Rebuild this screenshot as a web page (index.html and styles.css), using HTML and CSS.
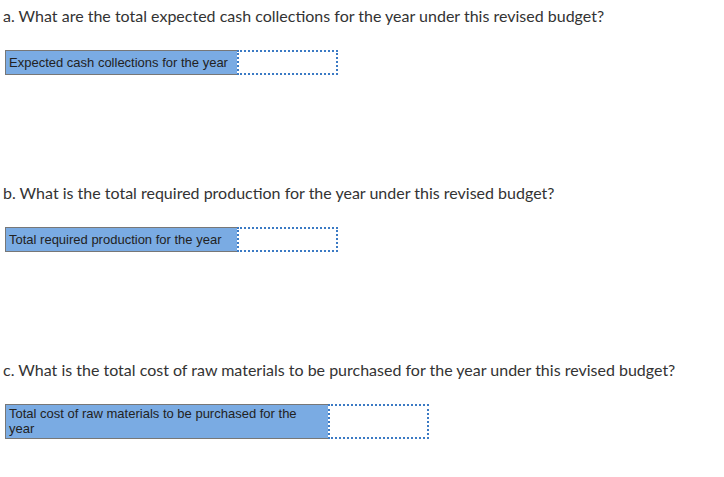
FILE: index.html
```html
<!DOCTYPE html>
<html>
<head>
<meta charset="utf-8">
<link rel="stylesheet" href="styles.css">
</head>
<body>
<div class="page">
  <section class="part">
    <p class="question">a. What are the total expected cash collections for the year under this revised budget?</p>
    <div class="answer-row">
      <div class="label label-short">Expected cash collections for the year</div>
      <div class="input"></div>
    </div>
  </section>
  <section class="part">
    <p class="question">b. What is the total required production for the year under this revised budget?</p>
    <div class="answer-row">
      <div class="label label-short">Total required production for the year</div>
      <div class="input"></div>
    </div>
  </section>
  <section class="part">
    <p class="question">c. What is the total cost of raw materials to be purchased for the year under this revised budget?</p>
    <div class="answer-row">
      <div class="label label-long">Total cost of raw materials to be purchased for the year</div>
      <div class="input"></div>
    </div>
  </section>
</div>
</body>
</html>
```
FILE: styles.css
```css
html, body {
  margin: 0;
  padding: 0;
  background: #ffffff;
}
.page {
  display: flex;
  flex-direction: column;
  gap: 108px;
  padding: 6px 0 0 3px;
}
.part {
  display: flex;
  flex-direction: column;
  gap: 24px;
}
.question {
  margin: 0;
  font-family: "Lato", "Open Sans", sans-serif;
  font-size: 16px;
  line-height: 20px;
  color: #333333;
}
.answer-row {
  display: flex;
  align-items: stretch;
  margin-left: 2px;
}
.label {
  box-sizing: border-box;
  border: 1px solid #777777;
  border-right: none;
  background: #7aabe3;
  font-family: "Liberation Sans", Arial, sans-serif;
  font-size: 13px;
  line-height: 15px;
  color: #222222;
  padding: 4px 3px 4px 3px;
}
.label-short {
  width: 232px;
  height: 25px;
}
.label-long {
  width: 323px;
  padding: 1px 3px 2px 3px;
  height: 35px;
}
.input {
  box-sizing: border-box;
  width: 101px;
  border: 2px dotted #3b7ac4;
  background: #ffffff;
}
```
